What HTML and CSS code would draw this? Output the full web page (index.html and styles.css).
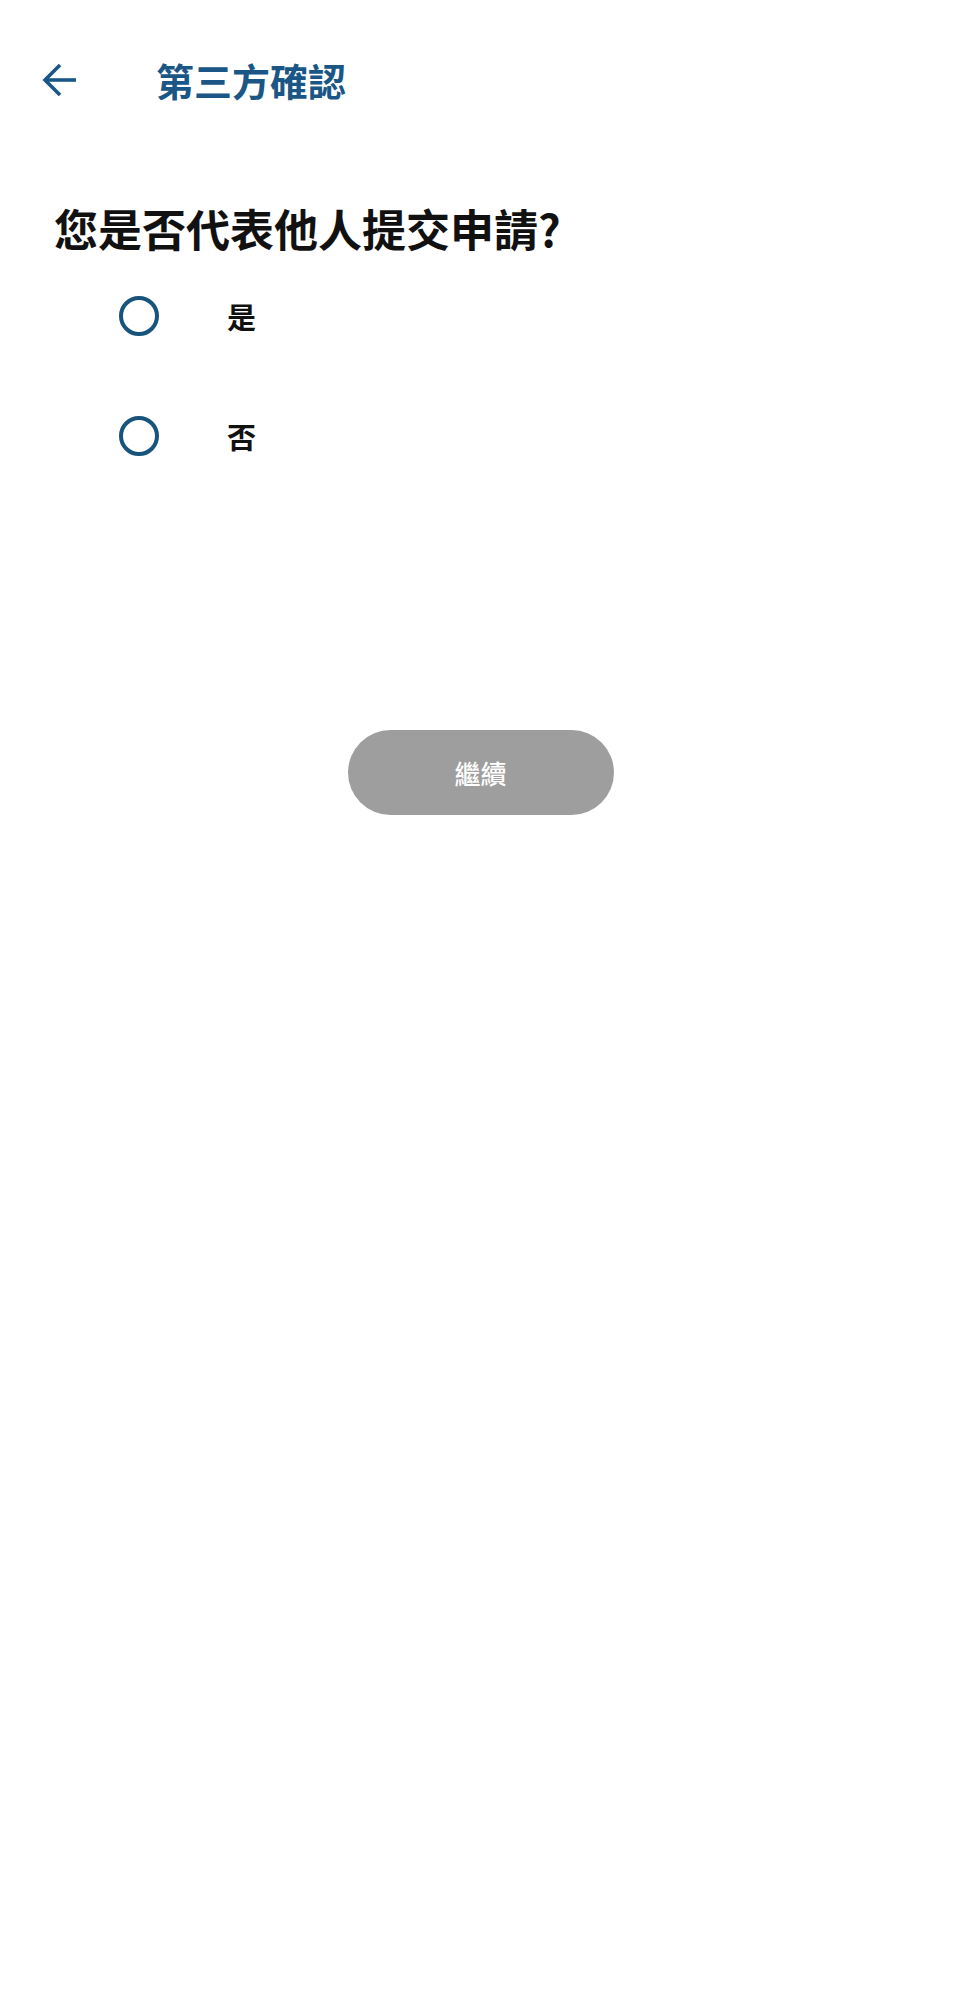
FILE: index.html
```html
<!DOCTYPE html>
<html lang="zh-Hant">
<head>
<meta charset="utf-8">
<title>第三方確認</title>
<link rel="stylesheet" href="styles.css">
</head>
<body>
<header class="appbar">
  <button class="back" aria-label="返回">
    <svg width="36" height="36" viewBox="0 0 36 36" fill="none" stroke="#1a5786" stroke-width="3.6" stroke-linecap="butt" stroke-linejoin="miter">
      <path d="M3 18H34"/>
      <path d="M18 3L3 18L18 33"/>
    </svg>
  </button>
  <h1 class="title">第三方確認</h1>
</header>
<main class="content">
  <h2 class="question">您是否代表他人提交申請?</h2>
  <div class="options">
    <label class="option"><span class="radio"></span><span class="label">是</span></label>
    <label class="option"><span class="radio"></span><span class="label">否</span></label>
  </div>
  <div class="actions">
    <button class="continue">繼續</button>
  </div>
</main>
</body>
</html>
```
FILE: styles.css
```css
html, body {
  margin: 0;
  padding: 0;
  background: #ffffff;
  font-family: "Noto Sans CJK TC", "Noto Sans", sans-serif;
}
.appbar {
  height: 160px;
  display: flex;
  align-items: center;
  padding-left: 42px;
}
.back {
  border: 0;
  background: none;
  padding: 0;
  width: 36px;
  height: 36px;
  display: flex;
}
.title {
  margin: 0 0 0 78px;
  font-size: 38px;
  font-weight: 700;
  color: #1a5786;
  line-height: 1;
}
.question {
  margin: 43px 0 0 0;
  padding-left: 54px;
  font-size: 44px;
  font-weight: 700;
  color: #111111;
  line-height: 50px;
}
.options {
  margin-top: 3px;
  display: flex;
  flex-direction: column;
}
.option {
  height: 120px;
  display: flex;
  align-items: center;
  padding-left: 119px;
}
.radio {
  width: 40px;
  height: 40px;
  box-sizing: border-box;
  border: 4px solid #17537d;
  border-radius: 50%;
}
.label {
  margin-left: 68px;
  font-size: 29px;
  font-weight: 700;
  color: #111111;
  line-height: 1;
}
.actions {
  display: flex;
  justify-content: center;
  margin-top: 234px;
}
.continue {
  width: 266px;
  height: 85px;
  border: 0;
  border-radius: 43px;
  background: #9e9e9e;
  color: #ffffff;
  font-family: "Noto Sans CJK TC", "Noto Sans", sans-serif;
  font-size: 26px;
  font-weight: 500;
}
```
